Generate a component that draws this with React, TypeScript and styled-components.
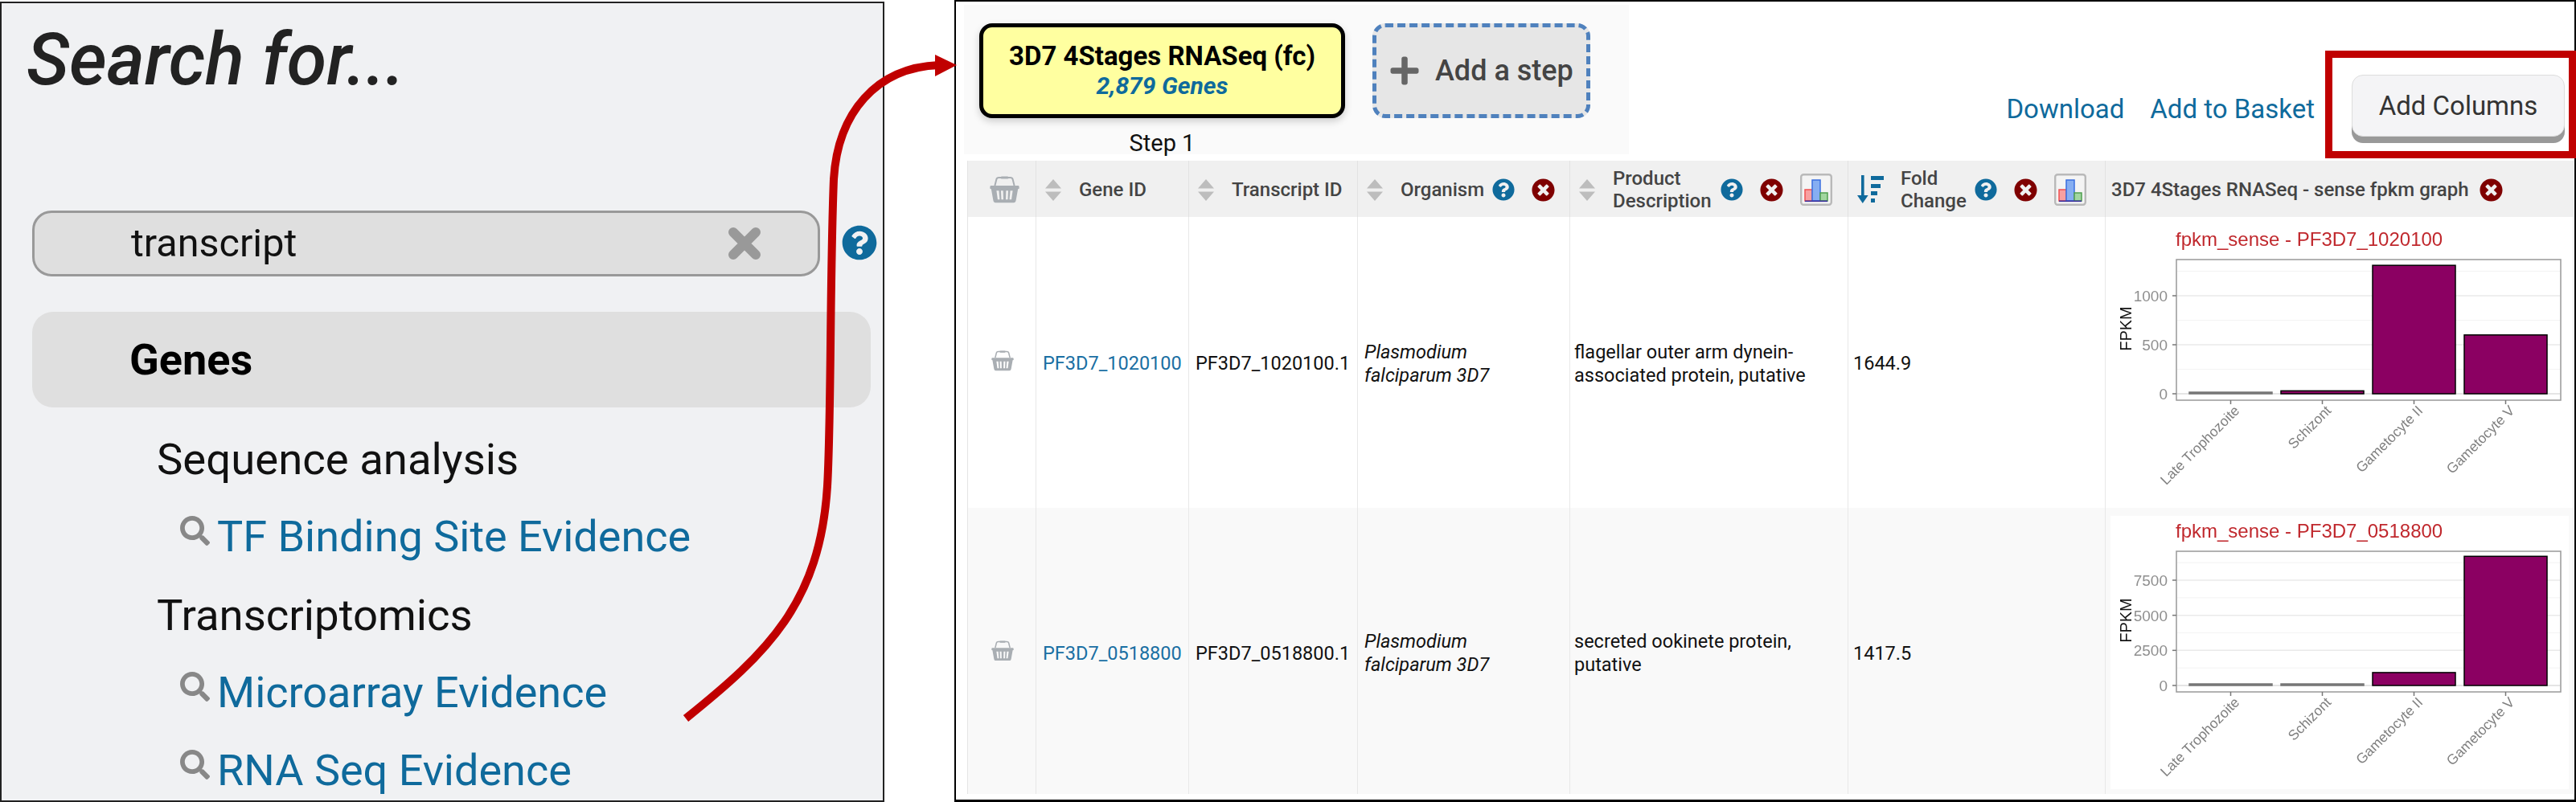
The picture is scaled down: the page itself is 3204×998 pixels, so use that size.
import * as React from "react";
import styled, { createGlobalStyle } from "styled-components";
import { FaQuestionCircle, FaTimesCircle, FaPlus, FaSearch } from "react-icons/fa";

const GlobalStyle = createGlobalStyle`
  html, body {
    margin: 0;
    padding: 0;
    background: #fff;
  }
  body {
    font-family: Roboto, "Liberation Sans", sans-serif;
  }
`;

const BLUE = "#0f6a9c";
const RED = "#c00000";

const Page = styled.div`
  position: relative;
  display: flex;
  width: 3204px;
  height: 998px;
  overflow: hidden;
`;

const SearchPanel = styled.section`
  box-sizing: border-box;
  width: 1100px;
  height: 996px;
  margin-top: 2px;
  padding: 0 0 0 38px;
  background: #f0f1f3;
  border: 2px solid #222;
  overflow: hidden;
  flex: none;
`;

const SearchTitle = styled.h1`
  margin: 28px 0 0 -7px;
  height: 104px;
  font-size: 90px;
  line-height: 86px;
  font-weight: 500;
  font-style: italic;
  color: #222;
`;

const SearchRow = styled.div`
  display: flex;
  align-items: center;
  gap: 27px;
  margin-top: 126px;
`;

const SearchBox = styled.div`
  box-sizing: border-box;
  display: flex;
  align-items: center;
  justify-content: space-between;
  width: 980px;
  height: 82px;
  padding: 0 70px 2px 120px;
  background: #dfdfdf;
  border: 3px solid #999;
  border-radius: 24px;
  font-size: 48.5px;
  color: #111;
  flex: none;
`;

const ClearSvg = styled.svg`
  width: 42px;
  height: 42px;
  margin-top: 2px;
  flex: none;
`;

const SearchHelp = styled(FaQuestionCircle)`
  width: 44px;
  height: 44px;
  color: ${BLUE};
  margin-top: -2px;
  flex: none;
`;

const GroupBar = styled.div`
  box-sizing: border-box;
  display: flex;
  align-items: center;
  width: 1043px;
  height: 119px;
  margin-top: 44px;
  padding-left: 121px;
  background: #dfdfdf;
  border-radius: 26px;
  font-size: 54px;
  font-weight: 700;
  color: #000;
`;

const ResultList = styled.div`
  display: flex;
  flex-direction: column;
  margin-top: 15px;
`;

const Category = styled.div`
  display: flex;
  align-items: center;
  height: 97px;
  padding-left: 155px;
  font-size: 54.5px;
  color: #111;
`;

const ResultLink = styled.a`
  display: flex;
  align-items: center;
  height: 97px;
  padding-left: 184px;
  font-size: 54px;
  color: ${BLUE};
`;

const LensIcon = styled(FaSearch)`
  width: 37px;
  height: 37px;
  margin: -14px 9px 0 0;
  color: #888;
  flex: none;
`;

const ResultsPanel = styled.section`
  box-sizing: border-box;
  position: relative;
  display: flex;
  flex-direction: column;
  width: 2017px;
  height: 998px;
  margin-left: 87px;
  padding: 0 0 8px 14px;
  border: 2px solid #000;
  border-bottom-width: 3px;
  flex: none;
`;

const TopRow = styled.div`
  display: flex;
  align-items: flex-start;
  height: 198px;
  flex: none;
`;

const Strategy = styled.div`
  box-sizing: border-box;
  display: grid;
  grid-template-columns: 455px 271px;
  column-gap: 34px;
  align-content: start;
  width: 827px;
  height: 186px;
  margin: 4px 0 0 -4px;
  padding: 23px 0 0 19px;
  background: #fafafa;
`;

const StepCard = styled.div`
  box-sizing: border-box;
  display: flex;
  flex-direction: column;
  align-items: center;
  justify-content: center;
  height: 118px;
  padding-bottom: 2px;
  background: #ffffa0;
  border: 5px solid #000;
  border-radius: 16px;
  box-shadow: 0 4px 10px rgba(0, 0, 0, 0.18);
`;

const StepName = styled.div`
  font-size: 33px;
  line-height: 38px;
  font-weight: 700;
  color: #000;
`;

const StepCount = styled.div`
  font-size: 30px;
  line-height: 35px;
  font-weight: 700;
  font-style: italic;
  color: ${BLUE};
`;

const AddStep = styled.div`
  box-sizing: border-box;
  display: flex;
  align-items: center;
  gap: 18px;
  height: 118px;
  padding-left: 15px;
  background: #e6e6e6;
  border: 5px dashed #4f81bd;
  border-radius: 16px;
  font-size: 36px;
  font-weight: 500;
  color: #444;
`;

const PlusIcon = styled(FaPlus)`
  width: 40px;
  height: 40px;
  color: #666;
`;

const StepLabel = styled.div`
  margin-top: 15px;
  text-align: center;
  font-size: 29px;
  line-height: 32px;
  color: #111;
`;

const Actions = styled.div`
  display: flex;
  align-items: flex-start;
  margin-left: auto;
  margin-right: -2px;
`;

const ActionLink = styled.a`
  margin: 112px 0 0 32px;
  font-size: 33px;
  line-height: 44px;
  color: ${BLUE};
`;

const Highlight = styled.div`
  box-sizing: border-box;
  width: 312px;
  height: 134px;
  margin: 61px 0 0 13px;
  padding: 21px 5px 0 24px;
  border: 9px solid ${RED};
`;

const ColumnsButton = styled.div`
  box-sizing: border-box;
  display: flex;
  align-items: center;
  justify-content: center;
  height: 77px;
  background: #f4f4f6;
  border: 1px solid #ddd;
  border-radius: 14px;
  box-shadow: 0 8px 0 #999;
  font-size: 33px;
  color: #333;
`;

const Table = styled.table`
  box-sizing: border-box;
  width: 1997px;
  table-layout: fixed;
  border-collapse: collapse;
  border-left: 1px solid #e4e4e4;
  flex: none;
`;

const HeadCell = styled.th`
  height: 70px;
  padding: 0;
  background: #f0f0f0;
  border-right: 1px solid #e2e2e2;
  text-align: left;
  font-size: 24px;
  line-height: 28px;
  font-weight: 500;
  color: #444;
`;

const HeadInner = styled.div<{ $pad?: number; $gap?: number }>`
  display: flex;
  align-items: center;
  gap: ${(p) => p.$gap ?? 22}px;
  padding: 2px 0 0 ${(p) => p.$pad ?? 11}px;
`;

const HeadTitle = styled.span<{ $width?: number }>`
  flex: none;
  width: ${(p) => (p.$width ? `${p.$width}px` : "auto")};
`;

const IconGroup = styled.span`
  display: flex;
  align-items: center;
  gap: 21px;
  margin-left: -12px;
`;

const BodyRow = styled.tr<{ $shade?: boolean; $height: number }>`
  height: ${(p) => p.$height}px;
  background: ${(p) => (p.$shade ? "#f9f9f9" : "#fff")};
`;

const BodyCell = styled.td<{ $pad?: number; $top?: number }>`
  padding: ${(p) => p.$top ?? 0}px 0 0 ${(p) => p.$pad ?? 4}px;
  border-right: 1px solid #e8e8e8;
  font-size: 23.5px;
  line-height: 29px;
  color: #111;
  vertical-align: middle;
`;

const GeneLink = styled.a`
  color: #1a6fa3;
`;

const Organism = styled.span`
  font-style: italic;
`;

const HelpIcon = styled(FaQuestionCircle)`
  width: 28px;
  height: 28px;
  color: ${BLUE};
  flex: none;
`;

const RemoveIcon = styled(FaTimesCircle)`
  width: 29px;
  height: 29px;
  color: #7f0000;
  flex: none;
`;

const ChartFrame = styled.div<{ $shade?: boolean; $shift: number }>`
  width: 570px;
  height: 340px;
  margin: ${(p) => p.$shift}px auto 0;
  background: ${(p) => (p.$shade ? "#fff" : "transparent")};
`;

const ChartSvg = styled.svg`
  display: block;
  filter: blur(0.5px);
  font-family: "Liberation Sans", Arial, sans-serif;
`;

const ArrowSvg = styled.svg`
  position: absolute;
  left: 0;
  top: 0;
  pointer-events: none;
`;

const SortIcon = () => (
  <svg width="20" height="27" viewBox="0 0 20 27" style={{ flex: "none" }}>
    <path d="M10 0 L20 11.5 H0 Z M0 15.5 H20 L10 27 Z" fill="#bdbdbd" />
  </svg>
);

const SortedIcon = () => (
  <svg width="34" height="36" viewBox="0 0 34 36" style={{ flex: "none" }}>
    <g fill={BLUE}>
      <rect x="5" y="0" width="3.6" height="27" />
      <path d="M0 25 H13.6 L6.8 35 Z" />
      <rect x="17" y="1" width="16" height="5" />
      <rect x="17" y="11" width="12" height="5" />
      <rect x="17" y="20" width="8" height="5" />
      <rect x="17" y="29" width="5" height="5" />
    </g>
  </svg>
);

const BasketIcon = ({ size }: { size: number }) => (
  <svg width={size} height={size * 0.9} viewBox="0 0 36 33">
    <path d="M6 12 L8 4 Q8.5 2 11 2 H25 Q27.5 2 28 4 L30 12" fill="none" stroke="#a9aeb3" strokeWidth="2" />
    <rect x="13" y="0.5" width="10" height="3" rx="1.5" fill="#a9aeb3" />
    <path
      fillRule="evenodd"
      fill="#a9aeb3"
      d="M1 12 H35 Q36 12 36 14 V15 Q36 16 34.5 16 L32 30 Q31.6 33 29 33 H7 Q4.4 33 4 30 L1.5 16 Q0 16 0 15 V14 Q0 12 1 12 Z M8 18 L9.5 29 H12 L11 18 Z M13.5 18 L14 29 H16.5 L16.2 18 Z M19.8 18 L19.5 29 H22 L22.5 18 Z M25 18 L24 29 H26.5 L28 18 Z"
    />
  </svg>
);

const BarChartIcon = () => (
  <svg width="40" height="40" viewBox="0 0 40 40" style={{ flex: "none" }}>
    <rect x="1.2" y="1.2" width="37.6" height="37.6" rx="3" fill="#f4f4f4" stroke="#b9b9b9" strokeWidth="2.4" />
    <rect x="6" y="20" width="9" height="14" fill="#f8a0a0" stroke="#f05050" strokeWidth="1.5" />
    <rect x="15" y="8" width="10" height="26" fill="#86aef2" stroke="#3a6fe0" strokeWidth="1.5" />
    <rect x="25" y="24" width="9" height="10" fill="#a2d6a0" stroke="#4f9f4f" strokeWidth="1.5" />
    <rect x="6" y="33.5" width="28" height="1.6" fill="#3a2f9c" />
  </svg>
);

interface ChartProps {
  title: string;
  ticks: number[];
  minor: number[];
  scale: number;
  values: number[];
}

const STAGES = ["Late Trophozoite", "Schizont", "Gametocyte II", "Gametocyte V"];
const BAR_X = [98, 212, 326, 440];
const BAR_WIDTH = 103;
const BASE_Y = 211;

const Chart = ({ title, ticks, minor, scale, values }: ChartProps) => (
  <ChartSvg width="570" height="340" viewBox="0 0 570 340">
    <text x="81" y="27" fontSize="24" fill="#c0282d">{title}</text>
    <rect x="82" y="44" width="478" height="175" fill="#fff" stroke="#999" strokeWidth="1.5" />
    {minor.map((m) => (
      <line key={m} x1="83" x2="559" y1={BASE_Y - m * scale} y2={BASE_Y - m * scale} stroke="#f3f3f3" strokeWidth="1" />
    ))}
    {ticks.map((t) => (
      <g key={t}>
        <line x1="83" x2="559" y1={BASE_Y - t * scale} y2={BASE_Y - t * scale} stroke={t === 0 ? "#ddd" : "#eaeaea"} strokeWidth="1.5" />
        <line x1="77" x2="82" y1={BASE_Y - t * scale} y2={BASE_Y - t * scale} stroke="#777" strokeWidth="1.5" />
        <text x="71" y={BASE_Y - t * scale + 7} fontSize="19" textAnchor="end" fill="#8f8f8f">{t}</text>
      </g>
    ))}
    {values.map((v, i) => {
      const h = Math.max(v * scale, 2);
      return (
        <rect
          key={STAGES[i]}
          x={BAR_X[i]}
          y={BASE_Y - h}
          width={BAR_WIDTH}
          height={h}
          fill={h > 3 ? "#8b0062" : "#777"}
          stroke={h > 3 ? "#000" : "#777"}
          strokeWidth="1.5"
        />
      );
    })}
    {STAGES.map((s, i) => {
      const x = BAR_X[i] + BAR_WIDTH / 2;
      return (
        <g key={s}>
          <line x1={x} x2={x} y1="219" y2="224" stroke="#777" strokeWidth="1.5" />
          <text
            transform={`translate(${x + 12} 233) rotate(-45)`}
            fontSize="17.5"
            textAnchor="end"
            fill="#808080"
          >
            {s}
          </text>
        </g>
      );
    })}
    <text transform="translate(26 130) rotate(-90)" fontSize="20" textAnchor="middle" fill="#111">FPKM</text>
  </ChartSvg>
);

const rows = [
  {
    gene: "PF3D7_1020100",
    transcript: "PF3D7_1020100.1",
    product: ["flagellar outer arm dynein-", "associated protein, putative"],
    fold: "1644.9",
    height: 362,
    textTop: 3,
    chartShift: -4,
    chart: {
      title: "fpkm_sense - PF3D7_1020100",
      ticks: [0, 500, 1000],
      minor: [250, 750, 1250],
      scale: 0.122,
      values: [5, 30, 1310, 600],
    },
  },
  {
    gene: "PF3D7_0518800",
    transcript: "PF3D7_0518800.1",
    product: ["secreted ookinete protein,", "putative"],
    fold: "1417.5",
    height: 356,
    textTop: 6,
    chartShift: 3,
    chart: {
      title: "fpkm_sense - PF3D7_0518800",
      ticks: [0, 2500, 5000, 7500],
      minor: [1250, 3750, 6250, 8750],
      scale: 0.01747,
      values: [10, 10, 920, 9200],
    },
  },
];

const COLUMN_WIDTHS = [85, 190, 210, 264, 346, 320, 582];

export default function App() {
  return (
    <Page>
      <GlobalStyle />
      <SearchPanel>
        <SearchTitle>Search for...</SearchTitle>
        <SearchRow>
          <SearchBox>
            transcript
            <ClearSvg viewBox="0 0 42 42">
              <path d="M7 7 L35 35 M35 7 L7 35" stroke="#999" strokeWidth="12" strokeLinecap="round" />
            </ClearSvg>
          </SearchBox>
          <SearchHelp />
        </SearchRow>
        <GroupBar>Genes</GroupBar>
        <ResultList>
          <Category>Sequence analysis</Category>
          <ResultLink><LensIcon />TF Binding Site Evidence</ResultLink>
          <Category>Transcriptomics</Category>
          <ResultLink><LensIcon />Microarray Evidence</ResultLink>
          <ResultLink><LensIcon />RNA Seq Evidence</ResultLink>
        </ResultList>
      </SearchPanel>

      <ResultsPanel>
        <TopRow>
          <Strategy>
            <StepCard>
              <StepName>3D7 4Stages RNASeq (fc)</StepName>
              <StepCount>2,879 Genes</StepCount>
            </StepCard>
            <AddStep>
              <PlusIcon />
              Add a step
            </AddStep>
            <StepLabel>Step 1</StepLabel>
          </Strategy>
          <Actions>
            <ActionLink>Download</ActionLink>
            <ActionLink>Add to Basket</ActionLink>
            <Highlight>
              <ColumnsButton>Add Columns</ColumnsButton>
            </Highlight>
          </Actions>
        </TopRow>

        <Table>
          <colgroup>
            {COLUMN_WIDTHS.map((w, i) => (
              <col key={i} style={{ width: w }} />
            ))}
          </colgroup>
          <thead>
            <tr>
              <HeadCell>
                <HeadInner $pad={27}><BasketIcon size={37} /></HeadInner>
              </HeadCell>
              <HeadCell>
                <HeadInner><SortIcon />Gene ID</HeadInner>
              </HeadCell>
              <HeadCell>
                <HeadInner><SortIcon />Transcript ID</HeadInner>
              </HeadCell>
              <HeadCell>
                <HeadInner><SortIcon />Organism<IconGroup><HelpIcon /><RemoveIcon /></IconGroup></HeadInner>
              </HeadCell>
              <HeadCell>
                <HeadInner>
                  <SortIcon />
                  <HeadTitle $width={124}>Product Description</HeadTitle>
                  <IconGroup><HelpIcon /><RemoveIcon /><BarChartIcon /></IconGroup>
                </HeadInner>
              </HeadCell>
              <HeadCell>
                <HeadInner $gap={20}>
                  <SortedIcon />
                  <HeadTitle $width={84}>Fold Change</HeadTitle>
                  <IconGroup><HelpIcon /><RemoveIcon /><BarChartIcon /></IconGroup>
                </HeadInner>
              </HeadCell>
              <HeadCell>
                <HeadInner $pad={7} $gap={13}>3D7 4Stages RNASeq - sense fpkm graph<RemoveIcon /></HeadInner>
              </HeadCell>
            </tr>
          </thead>
          <tbody>
            {rows.map((r, i) => (
              <BodyRow key={r.gene} $shade={i === 1} $height={r.height}>
                <BodyCell $pad={29} $top={r.textTop}><BasketIcon size={28} /></BodyCell>
                <BodyCell $pad={8} $top={r.textTop}><GeneLink>{r.gene}</GeneLink></BodyCell>
                <BodyCell $pad={8} $top={r.textTop}>{r.transcript}</BodyCell>
                <BodyCell $pad={8} $top={r.textTop}>
                  <Organism>Plasmodium<br />falciparum 3D7</Organism>
                </BodyCell>
                <BodyCell $pad={5} $top={r.textTop}>
                  {r.product[0]}<br />{r.product[1]}
                </BodyCell>
                <BodyCell $pad={6} $top={r.textTop}>{r.fold}</BodyCell>
                <BodyCell $pad={0}>
                  <ChartFrame $shade={i === 1} $shift={r.chartShift}>
                    <Chart {...r.chart} />
                  </ChartFrame>
                </BodyCell>
              </BodyRow>
            ))}
          </tbody>
        </Table>
      </ResultsPanel>

      <ArrowSvg width="3204" height="998" viewBox="0 0 3204 998">
        <path
          d="M853 894 C 955 812, 1020 750, 1029 605 C 1034 520, 1032 350, 1037 223 C 1042 140, 1090 84, 1168 81"
          fill="none"
          stroke={RED}
          strokeWidth="10"
        />
        <path d="M1163 68 L1190 81 L1163 95 Z" fill={RED} />
      </ArrowSvg>
    </Page>
  );
}
